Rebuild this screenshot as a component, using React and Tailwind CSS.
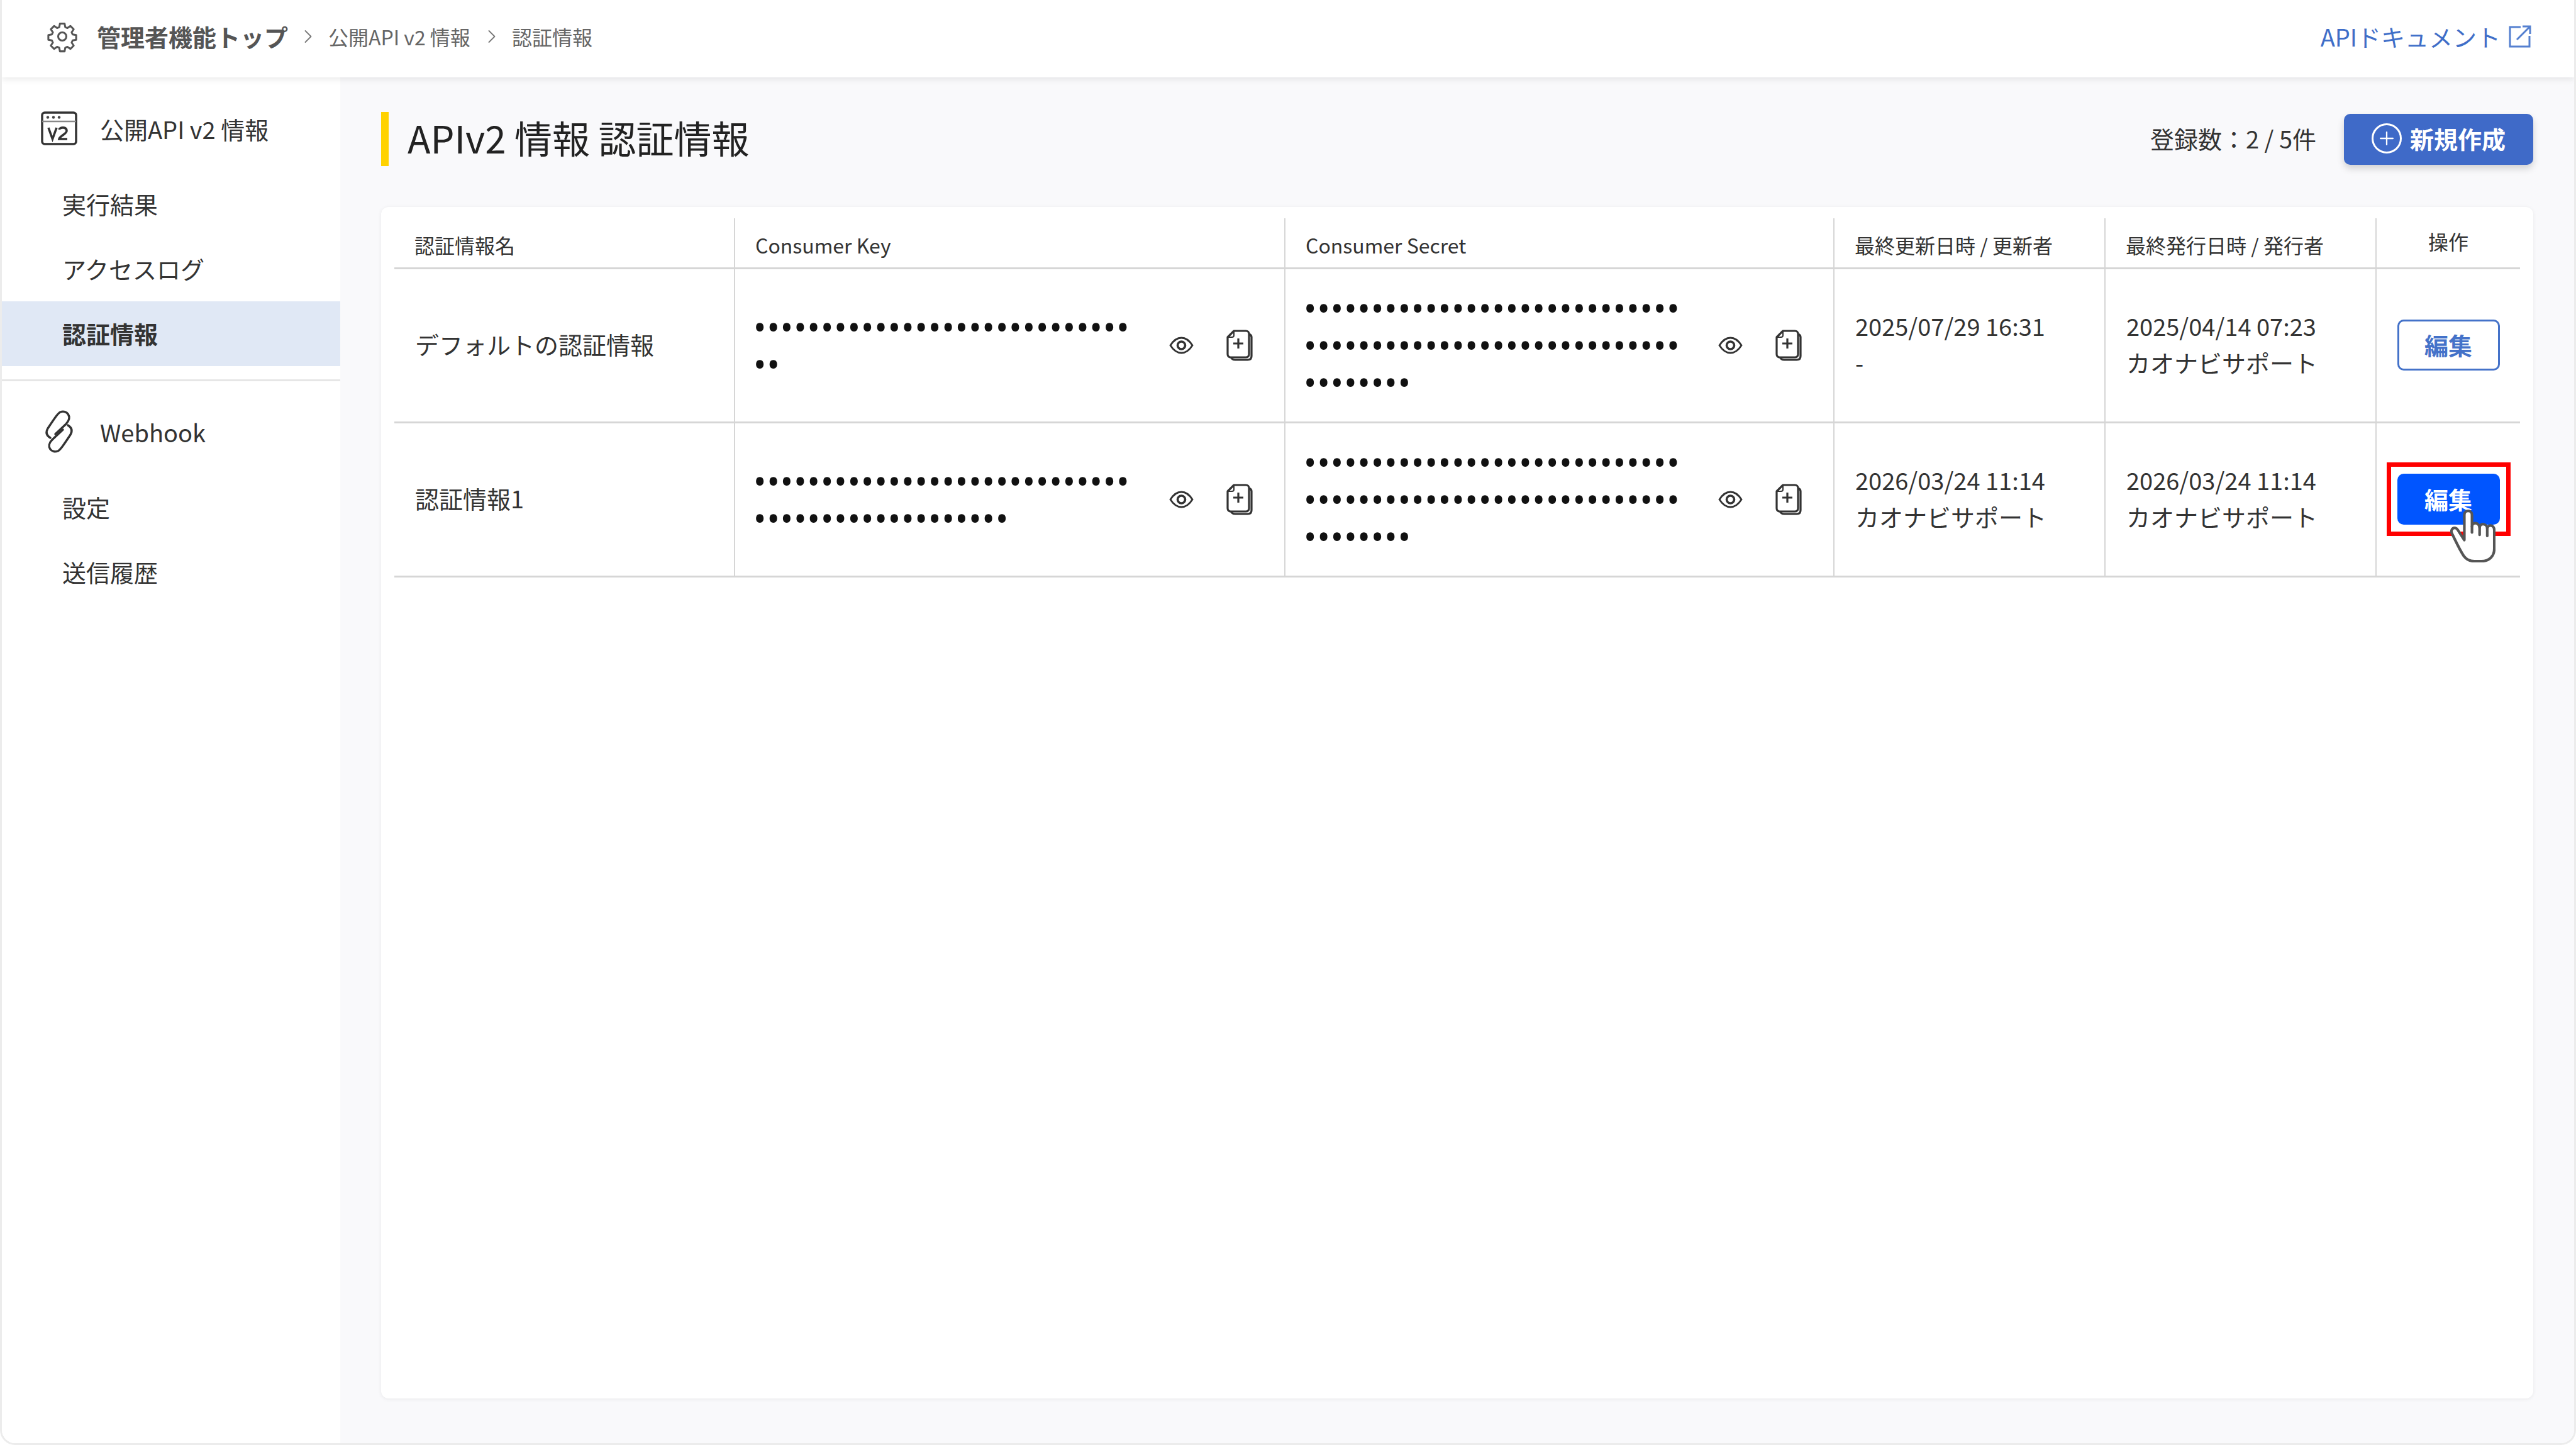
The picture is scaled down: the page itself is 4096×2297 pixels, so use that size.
import { Plus, ChevronRight } from "lucide-react";

const FONT = "font-['Noto_Sans_CJK_JP','Noto_Sans',sans-serif]";

function GearIcon() {
  return (
    <svg viewBox="0 0 24 24" className="w-[52px] h-[52px] shrink-0" fill="none" stroke="#555" strokeWidth="1.4" strokeLinejoin="round">
      <path d="M10.3 2.5h3.4l.5 2.6 1.6.7 2.2-1.5 2.4 2.4-1.5 2.2.7 1.6 2.6.5v3.4l-2.6.5-.7 1.6 1.5 2.2-2.4 2.4-2.2-1.5-1.6.7-.5 2.6h-3.4l-.5-2.6-1.6-.7-2.2 1.500-2.4-2.400 1.500-2.200-.7-1.600-2.600-.5v-3.400l2.600-.5.7-1.600-1.500-2.200 2.400-2.400 2.200 1.500 1.600-.7z" />
      <circle cx="12" cy="12" r="3" />
    </svg>
  );
}

function V2Icon() {
  return (
    <svg viewBox="0 0 58 54" className="w-[58px] h-[54px]" fill="none">
      <rect x="2" y="2" width="54" height="50" rx="4" stroke="#333" strokeWidth="3.500" />
      <path d="M2 16h54" stroke="#888" strokeWidth="2.500" />
      <circle cx="11" cy="9.500" r="2.200" fill="#444" />
      <circle cx="20" cy="9.500" r="2.200" fill="#444" />
      <circle cx="29" cy="9.500" r="2.200" fill="#444" />
      <path d="M12 26l6.500 18 6.500-18" stroke="#333" strokeWidth="3.600" />
      <path d="M29 29c1-4 12-5 12 2 0 5-11 8-12 13h13" stroke="#333" strokeWidth="3.600" />
    </svg>
  );
}

function LinkIcon() {
  return (
    <svg viewBox="0 0 52 72" className="w-[52px] h-[72px]" fill="none" stroke="#333" strokeWidth="3.400" strokeLinecap="round">
      <path d="M20 40 L37 24 C48 12 38 1 28 5 C24 7 20 13 8 31 C4 38 7 43 12 46" />
      <path d="M32 33 L15 49 C4 60 14 71 24 67 C28 65 32 59 44 41 C48 34 45 29 40 26" />
    </svg>
  );
}

function EyeIcon() {
  return (
    <svg viewBox="0 0 39 28" className="w-[39px] h-[28px]" fill="none" stroke="#333">
      <path d="M2 14C7 6 13 2 19.500 2S32 6 37 14c-5 8-11 12-17.500 12S7 22 2 14z" strokeWidth="2.800" />
      <circle cx="19.500" cy="14" r="6" strokeWidth="3.600" />
    </svg>
  );
}

function CopyIcon() {
  return (
    <svg viewBox="0 0 42 50" className="w-[42px] h-[50px]" fill="none" stroke="#333" strokeWidth="3.200" strokeLinejoin="round">
      <path d="M36 7c3 1 4 2 4 5v30c0 4-2 6-6 6H14c-4 0-6-2-7-5" />
      <path d="M12 2h19c3 0 5 2 5 5v32c0 3-2 5-5 5H7c-3 0-5-2-5-5V12z" fill="#fff" />
      <path d="M12 2v7c0 2-1 3-3 3H2" strokeWidth="2" />
      <path d="M19 14v16M11 22h16" strokeWidth="3.200" />
    </svg>
  );
}

function HandCursor() {
  return (
    <svg viewBox="0 0 77 90" className="absolute left-[84px] top-[57px] w-[72px] h-[84px]" fill="#fff" stroke="#555" strokeWidth="4.500" strokeLinejoin="round" strokeLinecap="round">
      <path d="M24 52 L13 35 C8 27 -1 33 3 41 C9 53 15 67 23 79 C28 86 34 88 41 88 L53 88 C67 88 75 79 75 67 L75 35 C75 25 63 25 63 33 C63 23 50 22 50 31 C49 21 37 21 37 29 L37 9 C37 0 24 0 24 9 Z" />
      <path d="M37 29v10M50 31v12M63 33v12" fill="none" />
    </svg>
  );
}

function SideHead({ icon, label }) {
  return (
    <div className="h-[120px] mb-[8px] pb-[2px] flex items-center pl-[62px]">
      <div className="w-[94px] shrink-0">{icon}</div>
      <span className="text-[38px] text-[#333]">{label}</span>
    </div>
  );
}

function SideItem({ label, active }) {
  return (
    <div className={`h-[103px] flex items-center pl-[96px] pb-[2px] text-[38px] text-[#333] ${active ? "bg-[#e0e8f5] font-bold" : ""}`}>
      {label}
    </div>
  );
}

function Secret({ length }) {
  return (
    <div className="flex items-center justify-between">
      <div className="w-[610px] leading-[59px] break-all text-[#111] text-[54px] tracking-[1.080px] font-['Noto_Sans',sans-serif]">
        {"•".repeat(length)}
      </div>
      <div className="flex items-center gap-[52px] mr-[50px]">
        <EyeIcon />
        <CopyIcon />
      </div>
    </div>
  );
}

function DateCell({ date, who }) {
  return (
    <td className="border-r-2 border-[#d6d6d6] px-[33px] pb-[4px] text-[38px] leading-[58px] text-[#333]">
      <div>{date}</div>
      <div>{who}</div>
    </td>
  );
}

const TH = "border-r-2 border-[#d6d6d6] px-[32px] pt-[6px] text-left font-normal text-[32px] text-[#333]";
const ROWS = [
  { name: "デフォルトの認証情報", key: 30, secret: 64, updated: "2025/07/29 16:31", updater: "-", issued: "2025/04/14 07:23" },
  { name: "認証情報1", key: 47, secret: 64, updated: "2026/03/24 11:14", updater: "カオナビサポート", issued: "2026/03/24 11:14", hover: true },
];

export default function App() {
  return (
    <div className={`h-[2297px] w-[4096px] overflow-hidden bg-white ${FONT}`}>
      <div className="h-full flex flex-col overflow-hidden border-x-[3px] border-b-[3px] border-[#ececec] rounded-b-[24px]">
        <header className="relative z-10 h-[123px] shrink-0 bg-white shadow-[0_3px_10px_rgba(0,0,0,0.09)] flex items-center pl-[70px] pr-[67px] pb-[8px]">
          <GearIcon />
          <span className="ml-[29px] text-[38px] font-bold text-[#555]">管理者機能トップ</span>
          <ChevronRight className="ml-[14px] w-[36px] h-[44px] text-[#777]" strokeWidth={1.2} />
          <span className="ml-[14px] text-[32px] text-[#666]">公開API v2 情報</span>
          <ChevronRight className="ml-[16px] w-[36px] h-[44px] text-[#777]" strokeWidth={1.2} />
          <span className="ml-[14px] text-[32px] text-[#666]">認証情報</span>
          <div className="ml-auto flex items-center gap-[12px] text-[#3f6ec8] text-[38px]">
            <span>APIドキュメント</span>
            <svg viewBox="0 0 38 38" className="w-[38px] h-[38px]" fill="none" stroke="#5580d0" strokeWidth="3">
              <path d="M20 4H3v31h31V18M14 24L35 3M23 3h12v12" />
            </svg>
          </div>
        </header>

        <div className="flex-1 flex min-h-0">
          <aside className="w-[538px] shrink-0 bg-white pt-[22px]">
            <SideHead icon={<V2Icon />} label="公開API v2 情報" />
            <SideItem label="実行結果" />
            <SideItem label="アクセスログ" />
            <SideItem label="認証情報" active />
            <div className="mt-[21px] mb-[21px] h-[3px] bg-[#e6e6e6]" />
            <SideHead icon={<div className="pl-[3px]"><LinkIcon /></div>} label="Webhook" />
            <SideItem label="設定" />
            <SideItem label="送信履歴" />
          </aside>

          <main className="flex-1 bg-[#f9f9fb] pl-[65px] pr-[65px] pt-[55px] pb-[71px] flex flex-col min-w-0">
            <div className="h-[86px] mb-[65px] flex items-center border-l-[12px] border-[#ffd200] pl-[30px]">
              <h1 className="text-[60px] pb-[6px] font-normal text-[#222]">APIv2 情報 認証情報</h1>
              <span className="ml-auto pb-[3px] text-[38px] text-[#333]">登録数：2 / 5件</span>
              <button className="ml-[44px] w-[301px] h-[81px] pb-[3px] rounded-[10px] bg-[#3f6ac8] text-white font-bold text-[38px] flex items-center justify-center gap-[13px] shadow-[0_6px_12px_rgba(0,0,0,0.16)]">
                <span className="w-[48px] h-[48px] rounded-full border-[3px] border-white flex items-center justify-center">
                  <Plus className="w-[34px] h-[34px]" strokeWidth={1.6} />
                </span>
                新規作成
              </button>
            </div>

            <div className="flex-1 bg-white rounded-[12px] shadow-[0_1px_6px_rgba(0,0,0,0.07)] pt-[18px] px-[21px]">
              <table className="w-full table-fixed border-collapse">
                <thead>
                  <tr className="h-[79px] border-b-[3px] border-[#d6d6d6]">
                    <th className={`${TH} w-[541px]`}>認証情報名</th>
                    <th className={`${TH} w-[875px]`}>Consumer Key</th>
                    <th className={`${TH} w-[873px]`}>Consumer Secret</th>
                    <th className={`${TH} w-[431px]`}>最終更新日時 / 更新者</th>
                    <th className={`${TH} w-[431px]`}>最終発行日時 / 発行者</th>
                    <th className="pb-[6px] text-center font-normal text-[32px] text-[#333]">操作</th>
                  </tr>
                </thead>
                <tbody>
                  {ROWS.map((row) => (
                    <tr key={row.name} className="h-[245px] border-b-[3px] border-[#d6d6d6]">
                      <td className="border-r-2 border-[#d6d6d6] px-[33px] pb-[4px] text-[38px] text-[#333]">{row.name}</td>
                      <td className="border-r-2 border-[#d6d6d6] pl-[29px]"><Secret length={row.key} /></td>
                      <td className="border-r-2 border-[#d6d6d6] pl-[29px]"><Secret length={row.secret} /></td>
                      <DateCell date={row.updated} who={row.updater} />
                      <DateCell date={row.issued} who="カオナビサポート" />
                      <td>
                        <div className="flex justify-center">
                          {row.hover ? (
                            <button className="relative w-[163px] h-[81px] pb-[2px] rounded-[10px] bg-[#0055ff] text-white font-bold text-[38px]">
                              編集
                              <span className="absolute -inset-x-[17px] -inset-y-[18px] border-[7px] border-[#ff0000]" />
                              <HandCursor />
                            </button>
                          ) : (
                            <button className="w-[163px] h-[81px] pb-[2px] rounded-[10px] border-[3px] border-[#4472c9] text-[#4472c9] font-bold text-[38px]">
                              編集
                            </button>
                          )}
                        </div>
                      </td>
                    </tr>
                  ))}
                </tbody>
              </table>
            </div>
          </main>
        </div>
      </div>
    </div>
  );
}
